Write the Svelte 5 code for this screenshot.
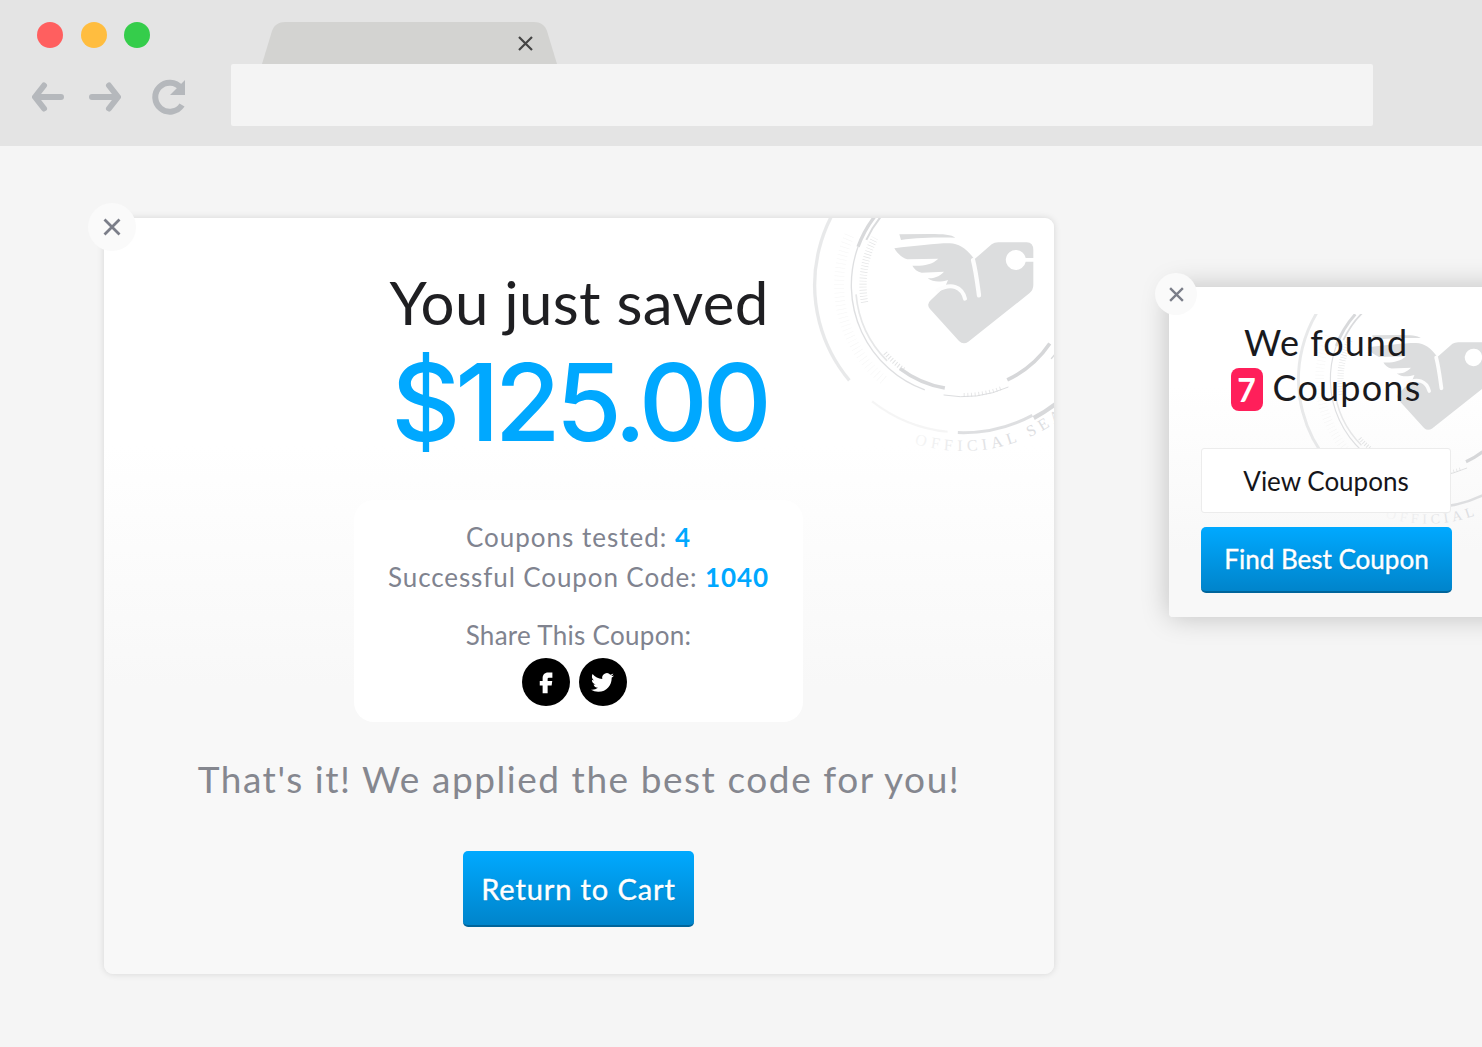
<script>
  const CX = 519, CY = 225;
  const pt = (r, a) => {
    const t = (a * Math.PI) / 180;
    return `${(CX + r * Math.cos(t)).toFixed(1)} ${(CY + r * Math.sin(t)).toFixed(1)}`;
  };
  const arc = (r, a1, a2) => `M${pt(r, a1)}A${r} ${r} 0 ${Math.abs(a2 - a1) > 180 ? 1 : 0} 1 ${pt(r, a2)}`;
  const rings = [
    { r: 445, a: 140, b: 248, w: 10, o: 0.55 },
    { r: 443, a: 96, b: 128, w: 6, o: 0.25 },
    { r: 443, a: 62, b: 92, w: 9, o: 0.8 },
    { r: 452, a: 36, b: 62, w: 13, o: 0.95 },
    { r: 448, a: 248, b: 262, w: 7, o: 0.5 },
    { r: 335, a: 110, b: 200, w: 4, o: 0.8 },
    { r: 335, a: 66, b: 100, w: 3, o: 0.85 },
    { r: 335, a: 200, b: 222, w: 10, o: 0.95 },
    { r: 320, a: 205, b: 245, w: 6, o: 0.9 },
    { r: 314, a: 100, b: 127, w: 11, o: 0.95 },
    { r: 314, a: 34, b: 65, w: 11, o: 1 },
    { r: 318, a: 279, b: 301, w: 10, o: 0.9 },
    { r: 345, a: 20, b: 40, w: 4, o: 0.9 },
    { r: 322, a: 135, b: 175, w: 5, o: 0.6 },
  ];
</script>

{#snippet seal()}
  <defs>
    <linearGradient id="sealfade" gradientUnits="userSpaceOnUse" x1="370" y1="0" x2="640" y2="0">
      <stop offset="0" stop-color="#f6f6f6" />
      <stop offset="1" stop-color="#dcdde0" />
    </linearGradient>
  </defs>
  <g fill="none" stroke="#d6d7d9">
    {#each rings as g}
      <path d={arc(g.r, g.a, g.b)} stroke-width={g.w} opacity={g.o} />
    {/each}
    <path d={arc(300, 170, 208)} stroke-width="22" stroke-dasharray="2 7" opacity=".7" />
    <path d={arc(372, 130, 205)} stroke-width="30" stroke-dasharray="1.500 11" opacity=".25" />
    <path d={arc(310, 125, 140)} stroke-width="14" stroke-dasharray="3 6" opacity=".7" />
    <path d={arc(330, 70, 90)} stroke-width="12" stroke-dasharray="3 8" opacity=".6" />
  </g>
  <g transform="translate(270 45)">
    <path fill="#dcddde" d="M58 28 L150 27 C190 27 215 29 226 38 C180 37 110 38 63 45 Z" />
    <path fill="#dcddde" fill-rule="evenodd" d="M43 70 C100 63 170 55 205 55 C235 53 262 72 283 103 L335 58 Q343 52 355 52 L440 52 Q460 53 460 75 L460 180 Q460 195 448 205 L265 350 Q250 360 237 348 L150 252 Q138 238 152 226 L196 184 L204 165 C180 172 160 172 143 160 C160 160 178 156 192 140 L125 143 C112 140 102 132 97 122 C125 124 155 120 175 101 L82 103 C66 98 52 86 43 70 Z M410 75 A30 30 0 1 0 437 110 L460 110 L460 99 L437 99 A30 30 0 0 0 410 75 Z" />
    <path fill="none" stroke="#fdfdfd" stroke-width="13" stroke-linecap="round" d="M279 105 C288 140 292 175 297 211" />
    <path fill="none" stroke="#fdfdfd" stroke-width="12" stroke-linecap="round" d="M172 196 C215 172 246 186 255 221" />
  </g>
  <text font-family="Liberation Serif, serif" font-size="48" letter-spacing="14" fill="url(#sealfade)">
    <path id="sealarc" d={`M${pt(498, 107)}A498 498 0 0 0 ${pt(498, 10)}`} fill="none" />
    <textPath href="#sealarc">OFFICIAL SEAL</textPath>
  </text>
{/snippet}

<div class="page">
  <header class="chrome">
    <div class="controls">
      <div class="lights">
        <span class="light red"></span><span class="light amber"></span><span class="light green"></span>
      </div>
      <div class="nav">
        <svg width="32" height="30" viewBox="0 0 32 30"><path d="M29 15H4M12 3.500 3 15l9 11.500" fill="none" stroke="#b5b8bc" stroke-width="6" stroke-linecap="round" stroke-linejoin="round"/></svg>
        <svg width="32" height="30" viewBox="0 0 32 30"><path d="M3 15H28M20 3.500 29 15 20 26.500" fill="none" stroke="#b5b8bc" stroke-width="6" stroke-linecap="round" stroke-linejoin="round"/></svg>
        <svg class="reload" width="36" height="36" viewBox="0 0 36 36"><path d="M31 26a14.500 14.500 0 1 1-1-17" fill="none" stroke="#b5b8bc" stroke-width="6"/><path d="M34 1v15H19z" fill="#b5b8bc"/></svg>
      </div>
    </div>
    <div class="tabs-and-bar">
      <div class="tabrow">
        <svg class="tab" width="296" height="42" viewBox="0 0 296 42"><path d="M0 42 10 9C12 3 17 0 23 0H272C278 0 283 3 285 9L295 42Z" fill="#d3d3d1"/><path d="M257 15 270 28M270 15 257 28" stroke="#444" stroke-width="2.200"/></svg>
      </div>
      <div class="address"></div>
    </div>
  </header>

  <main class="stage">
    <section class="card">
      <div class="watermark">
        <svg width="280" height="250" viewBox="0 0 840 750">{@render seal()}</svg>
      </div>
      <button class="close big" aria-label="Close">
        <svg width="20" height="20" viewBox="0 0 20 20"><path d="M2.500 2.500 17.500 17.500M17.500 2.500 2.500 17.500" stroke="#7b7e89" stroke-width="2.800"/></svg>
      </button>
      <h1>You just saved</h1>
      <div class="amount">$125.00</div>
      <div class="panel">
        <p class="l1">Coupons tested: <b>4</b></p>
        <p class="l2">Successful Coupon Code: <b>1040</b></p>
        <p class="share">Share This Coupon:</p>
        <div class="social">
          <span class="round"><svg width="30" height="30" viewBox="0 0 24 24"><path d="M14.200 8.500h2.900V4.300h-3.300C10.800 4.300 9.300 6.200 9.300 8.800v2.400H7v3.600h2.300V21h4v-6.200h3.200l.5-3.600h-3.700V9.300c0-.5.300-.8.900-.8z" fill="#fff"/></svg></span>
          <span class="round"><svg width="23" height="23" viewBox="0 0 24 24"><path d="M23.953 4.570a10 10 0 0 1-2.825.775 4.958 4.958 0 0 0 2.163-2.723c-.951.555-2.005.959-3.127 1.184a4.920 4.920 0 0 0-8.384 4.482C7.690 8.095 4.067 6.130 1.640 3.162a4.822 4.822 0 0 0-.666 2.475c0 1.710.870 3.213 2.188 4.096a4.904 4.904 0 0 1-2.228-.616v.060a4.923 4.923 0 0 0 3.946 4.827 4.996 4.996 0 0 1-2.212.085 4.936 4.936 0 0 0 4.604 3.417 9.867 9.867 0 0 1-6.102 2.105c-.390 0-.779-.023-1.170-.067a13.995 13.995 0 0 0 7.557 2.209c9.053 0 13.998-7.496 13.998-13.985 0-.210 0-.420-.015-.630A9.935 9.935 0 0 0 24 4.590z" fill="#fff"/></svg></span>
        </div>
      </div>
      <p class="note">That's it! We applied the best code for you!</p>
      <button class="cta return">Return to Cart</button>
    </section>

    <aside class="popup">
      <div class="watermark">
        <svg class="small-seal" width="243.600" height="217.500" viewBox="0 0 840 750">{@render seal()}</svg>
      </div>
      <button class="close small" aria-label="Close">
        <svg width="17" height="17" viewBox="0 0 20 20"><path d="M2.500 2.500 17.500 17.500M17.500 2.500 2.500 17.500" stroke="#7b7e89" stroke-width="2.800"/></svg>
      </button>
      <h2>We found<br /><span class="coupons"><span class="badge">7</span> Coupons</span></h2>
      <button class="ghost">View Coupons</button>
      <button class="cta find">Find Best Coupon</button>
    </aside>
  </main>
</div>

<style>
  :global(body) { margin: 0; background: #f5f5f5; }
  .page { width: 1482px; height: 1047px; overflow: hidden; background: #f5f5f5; font-family: Lato, "Open Sans", sans-serif; }

  .chrome { height: 146px; background: #e4e4e4; display: flex; padding-top: 22px; box-sizing: border-box; }
  .controls { width: 231px; flex-shrink: 0; }
  .lights { display: flex; gap: 17.500px; padding-left: 37px; }
  .light { width: 26px; height: 26px; border-radius: 50%; }
  .red { background: #ff5f5f; }
  .amber { background: #ffbd3f; }
  .green { background: #35cd4b; }
  .nav { display: flex; align-items: center; padding-left: 32px; gap: 25px; margin-top: 31px; height: 36px; }
  .reload { margin-left: 5px; }
  .tabs-and-bar { width: 1142px; }
  .tabrow { height: 42px; padding-left: 31px; }
  .tab { display: block; }
  .address { height: 62px; background: #f4f4f4; border-radius: 2px; }

  .stage { display: flex; align-items: flex-start; padding: 72px 0 0 104px; gap: 115px; }

  .card { position: relative; flex-shrink: 0; width: 950px; height: 756px; box-sizing: border-box; border-radius: 9px; background: linear-gradient(#fff 0, #fff 30%, #f8f8f8 62%); box-shadow: 0 0 7px rgba(0,0,0,.13); display: flex; flex-direction: column; align-items: center; }
  .watermark { position: absolute; inset: 0; overflow: hidden; border-radius: inherit; }
  .card .watermark svg { position: absolute; left: 686px; top: -8px; }
  .small-seal { position: absolute; left: 108px; top: 27px; }

  .close { position: absolute; border: 0; padding: 0; background: #fafafa; border-radius: 50%; display: flex; align-items: center; justify-content: center; }
  .close.big { width: 48px; height: 48px; left: -16px; top: -15px; }
  .close.small { width: 42px; height: 42px; left: -14px; top: -14px; }

  h1 { position: relative; margin: 48px 0 0; font-size: 60px; line-height: 72px; font-weight: 400; letter-spacing: .3px; color: #1f1f22; }
  .amount { position: relative; margin-top: 2px; font-family: Inter, Lato, sans-serif; font-size: 107px; line-height: 124px; color: #00a8ff; font-weight: 500; letter-spacing: -5px; }
  .panel { position: relative; width: 449px; height: 222px; margin: 36px 1px 0 0; background: #fff; border-radius: 20px; box-sizing: border-box; padding-top: 17px; text-align: center; color: #80838f; font-size: 26px; }
  .panel p { margin: 0; line-height: 40px; }
  .l1 { letter-spacing: 1px; }
  .l2 { letter-spacing: .9px; }
  .panel b { color: #00a8ff; font-weight: 700; }
  .panel .share { margin-top: 18px; letter-spacing: .3px; }
  .social { display: flex; justify-content: center; gap: 9px; margin: 3px 0 0 -9px; }
  .round { width: 48px; height: 48px; border-radius: 50%; background: #000; display: flex; align-items: center; justify-content: center; }
  .note { position: relative; margin: 33px 0 0; font-size: 37px; line-height: 48px; color: #85878f; letter-spacing: 1.550px; }

  .cta { position: relative; display: block; border: 0; border-bottom: 2px solid #00659b; border-radius: 5px; background: linear-gradient(#00a9ff, #0084cb); color: #fff; font-family: inherit; text-shadow: 0 1px 1px rgba(0,0,0,.15); padding: 0; -webkit-text-stroke: .4px #fff; }
  .return { width: 231px; height: 76px; margin: 48px 1px 0 0; font-size: 29px; letter-spacing: .9px; }

  .popup { position: relative; flex-shrink: 0; width: 400px; height: 330px; margin-top: 69px; box-sizing: border-box; padding: 32px 0 0 32px; border-radius: 4px; background: linear-gradient(#fff 0, #fff 30%, #f8f8f8 80%); box-shadow: 0 0 28px rgba(0,0,0,.22); }
  h2 { position: relative; width: 250px; margin: 0; text-align: center; font-size: 36px; line-height: 46px; font-weight: 400; letter-spacing: 1px; color: #1a1a1d; }
  .coupons { display: inline-flex; align-items: flex-start; gap: 10px; height: 46px; line-height: 42px; letter-spacing: 1.200px; }
  .badge { width: 32px; height: 43px; margin-top: 2px; line-height: 43px; flex-shrink: 0; border-radius: 8px; background: #ff1f5a; color: #fff; font-size: 32px; font-weight: 700; letter-spacing: 0; }
  .ghost { position: relative; display: block; width: 250px; height: 65px; margin-top: 36px; background: #fff; border: 1px solid #ececec; border-radius: 3px; font-family: inherit; font-size: 26px; color: #15151a; padding: 0; }
  .find { width: 251px; height: 66px; margin-top: 14px; font-size: 26px; }
</style>
